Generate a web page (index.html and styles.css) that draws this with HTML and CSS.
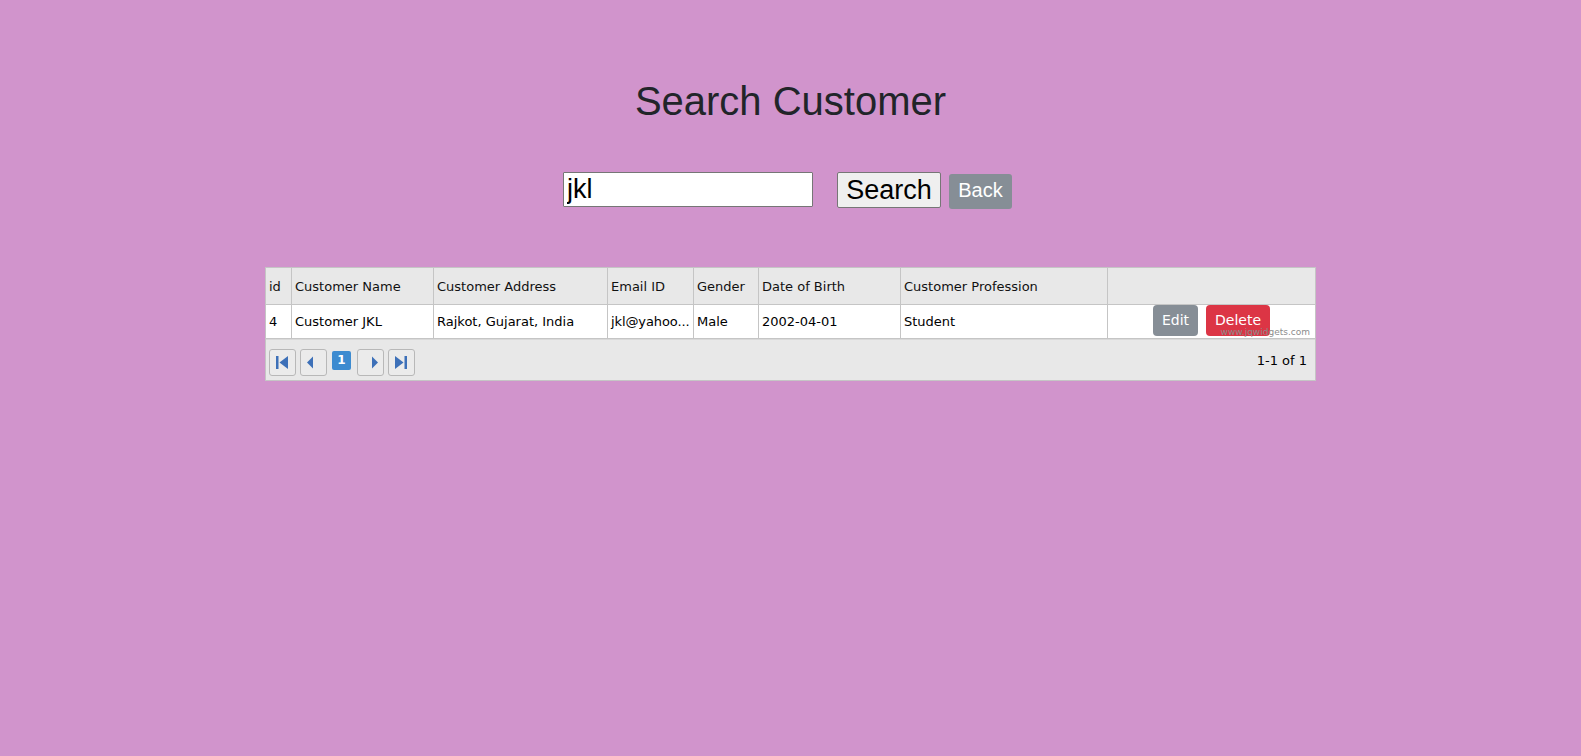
FILE: index.html
```html
<!DOCTYPE html>
<html lang="en">
<head>
<meta charset="utf-8">
<title>Search Customer</title>
<link rel="stylesheet" href="styles.css">
</head>
<body>
<main class="page">
  <h1 class="title">Search Customer</h1>
  <form class="search-bar">
    <input class="search-input" type="text" value="jkl">
    <button class="btn-search" type="button">Search</button>
    <a class="btn-back" href="#">Back</a>
  </form>

  <div class="grid">
    <div class="grid-row grid-header">
      <div class="cell">id</div>
      <div class="cell">Customer Name</div>
      <div class="cell">Customer Address</div>
      <div class="cell">Email ID</div>
      <div class="cell">Gender</div>
      <div class="cell">Date of Birth</div>
      <div class="cell">Customer Profession</div>
      <div class="cell cell-last"></div>
    </div>
    <div class="grid-body">
      <div class="grid-row grid-data">
        <div class="cell">4</div>
        <div class="cell">Customer JKL</div>
        <div class="cell">Rajkot, Gujarat, India</div>
        <div class="cell cell-email" title="jkl@yahoo.com">jkl@yahoo...</div>
        <div class="cell">Male</div>
        <div class="cell">2002-04-01</div>
        <div class="cell">Student</div>
        <div class="cell cell-last cell-actions">
          <button class="btn-row btn-edit" type="button">Edit</button>
          <button class="btn-row btn-delete" type="button">Delete</button>
        </div>
      </div>
      <span class="watermark">www.jqwidgets.com</span>
    </div>
    <div class="pager">
      <button class="pg-btn pg-first" type="button" aria-label="First">
        <svg width="25" height="25" viewBox="1 1 25 25"><rect x="7" y="7" width="2.5" height="13" fill="#3d70b8"/><polygon points="10.5,13.5 19,7 19,20" fill="#3d70b8"/></svg>
      </button>
      <button class="pg-btn pg-prev" type="button" aria-label="Previous">
        <svg width="25" height="25" viewBox="1 1 25 25"><polygon points="7,13.5 13,7.5 13,19.5" fill="#3d70b8"/></svg>
      </button>
      <span class="pg-page">1</span>
      <button class="pg-btn pg-next" type="button" aria-label="Next">
        <svg width="25" height="25" viewBox="1 1 25 25"><polygon points="21,13.5 15,7.5 15,19.5" fill="#3d70b8"/></svg>
      </button>
      <button class="pg-btn pg-last" type="button" aria-label="Last">
        <svg width="25" height="25" viewBox="1 1 25 25"><polygon points="15.5,13.5 7,7 7,20" fill="#3d70b8"/><rect x="16.5" y="7" width="2.5" height="13" fill="#3d70b8"/></svg>
      </button>
      <span class="pg-info">1-1 of 1</span>
    </div>
  </div>
</main>
</body>
</html>
```

FILE: styles.css
```css
html, body {
  margin: 0;
  padding: 0;
}

body {
  background: #d194cc;
  font-family: "Liberation Sans", Arial, sans-serif;
  color: #212529;
}

.page {
  padding-top: 77px;
}

.title {
  margin: 0 0 47px;
  font-size: 40px;
  line-height: 48px;
  font-weight: normal;
  text-align: center;
  color: #212529;
}

.search-bar {
  display: flex;
  justify-content: center;
  align-items: flex-start;
  height: 37px;
  margin: 0 0 58px;
  padding-right: 6px;
}

.search-input {
  box-sizing: border-box;
  width: 250px;
  height: 35px;
  margin: 0 24px 0 0;
  padding: 0 3px;
  border: 1px solid #767676;
  border-radius: 1px;
  background: #fff;
  font-family: "Liberation Sans", Arial, sans-serif;
  font-size: 27px;
  color: #000;
  outline: none;
}

.btn-search {
  box-sizing: border-box;
  width: 104px;
  height: 36px;
  margin: 0 8px 0 0;
  padding: 0;
  border: 1px solid #767676;
  border-radius: 2px;
  background: #efefef;
  font-family: "Liberation Sans", Arial, sans-serif;
  font-size: 27px;
  line-height: 34px;
  color: #000;
}

.btn-back {
  display: block;
  box-sizing: border-box;
  width: 63px;
  height: 35px;
  margin-top: 2px;
  border-radius: 3px;
  background: #868e96;
  color: #fff;
  font-size: 20px;
  line-height: 32px;
  text-align: center;
  text-decoration: none;
}

.grid {
  box-sizing: border-box;
  width: 1051px;
  margin: 0 auto;
  border: 1px solid #c5c5c5;
  background: #e8e8e8;
  font-family: "DejaVu Sans", Verdana, sans-serif;
  font-size: 13px;
  color: #000;
}

.grid-row {
  display: grid;
  grid-template-columns: 26px 142px 174px 86px 65px 142px 207px 1fr;
}

.cell {
  box-sizing: border-box;
  padding: 0 3px;
  border-right: 1px solid #c5c5c5;
  overflow: hidden;
  white-space: nowrap;
}

.cell-email {
  padding-right: 0;
  letter-spacing: -0.1px;
}

.cell-last {
  border-right: none;
}

.grid-header {
  height: 36px;
  border-bottom: 1px solid #c5c5c5;
  line-height: 37px;
  color: #111;
}

.grid-body {
  position: relative;
  background: #fff;
  border-bottom: 1px solid #c5c5c5;
}

.grid-data {
  height: 33px;
  line-height: 33px;
}

.cell-actions {
  display: flex;
  justify-content: center;
  align-items: flex-start;
  gap: 8px;
  padding: 0;
}

.btn-row {
  height: 31px;
  margin: 0;
  padding: 0 9px;
  border: none;
  border-radius: 4px;
  color: #fff;
  font-family: "DejaVu Sans", Verdana, sans-serif;
  font-size: 14px;
  line-height: 31px;
}

.btn-edit {
  background: #868e96;
}

.btn-delete {
  background: #dc3545;
}

.watermark {
  position: absolute;
  right: 5px;
  bottom: 0;
  font-size: 9px;
  line-height: 11px;
  color: #8c8c8c;
}

.pager {
  display: flex;
  align-items: flex-start;
  height: 41px;
  box-sizing: border-box;
  padding: 9px 8px 0 3px;
  border-top: 1px solid #d9d9d9;
}

.pg-btn {
  box-sizing: border-box;
  display: flex;
  align-items: center;
  justify-content: center;
  width: 27px;
  height: 27px;
  margin: 0;
  padding: 0;
  border: 1px solid #b8b8b8;
  border-radius: 3px;
  background: #ebebeb;
}

.pg-prev {
  margin-left: 4px;
}

.pg-page {
  box-sizing: border-box;
  width: 19px;
  height: 19px;
  margin: 2px 0 0 5px;
  border-radius: 2px;
  background: #3d8bd0;
  color: #fff;
  font-size: 12px;
  font-weight: bold;
  line-height: 19px;
  text-align: center;
}

.pg-next {
  margin-left: 6px;
}

.pg-last {
  margin-left: 4px;
}

.pg-info {
  margin: 4px 0 0 auto;
  line-height: 15px;
}
```
